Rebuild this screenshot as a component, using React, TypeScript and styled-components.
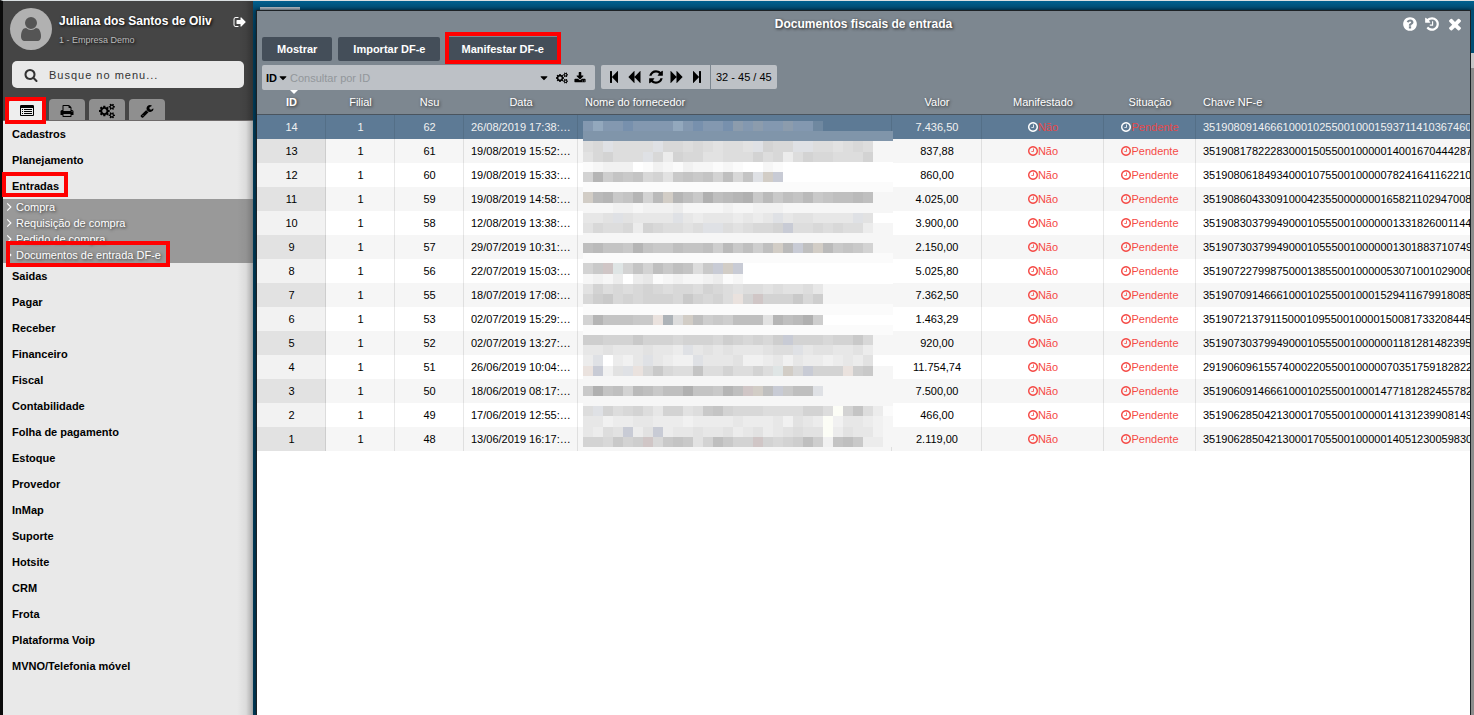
import React from "react";
import styled, { createGlobalStyle, css } from "styled-components";

const GlobalStyle = createGlobalStyle`
  *, *::before, *::after { box-sizing: border-box; }
  body {
    margin: 0;
    font-family: "Liberation Sans", Arial, sans-serif;
    font-size: 11px;
    line-height: 16px;
    color: #000;
    overflow: hidden;
  }
  button, input { font: inherit; color: inherit; border: 0; padding: 0; margin: 0; background: none; }
  a { color: inherit; text-decoration: none; }
  ul { list-style: none; margin: 0; padding: 0; }
`;

/* ---------- icons ---------- */

const paths = {
  user: "M1536 1399q0 109-62.5 187t-150.5 78h-854q-88 0-150.5-78t-62.5-187q0-85 8.5-160.5t31.5-152 58.5-131 94-89 134.5-34.5q131 128 313 128t313-128q76 0 134.5 34.5t94 89 58.5 131 31.5 152 8.5 160.5zm-256-887q0 159-112.5 271.5t-271.5 112.5-271.5-112.5-112.5-271.5 112.5-271.5 271.5-112.5 271.5 112.5 112.5 271.5z",
  signOut: "M704 1440q0 4 1 20t.5 26.5-3 23.5-10 19.5-20.5 6.5h-320q-119 0-203.5-84.5t-84.5-203.5v-704q0-119 84.5-203.5t203.5-84.5h320q13 0 22.5 9.5t9.5 22.5q0 4 1 20t.5 26.5-3 23.5-10 19.5-20.5 6.5h-320q-66 0-113 47t-47 113v704q0 66 47 113t113 47h312l11.5 1 11.5 3 8 5.5 7 9 2 13.5zm928-544q0 26-19 45l-544 544q-19 19-45 19t-45-19-19-45v-288h-448q-26 0-45-19t-19-45v-384q0-26 19-45t45-19h448v-288q0-26 19-45t45-19 45 19l544 544q19 19 19 45z",
  search: "M1216 832q0-185-131.5-316.5t-316.5-131.5-316.5 131.5-131.5 316.5 131.5 316.5 316.5 131.5 316.5-131.5 131.5-316.5zm512 832q0 52-38 90t-90 38q-54 0-90-38l-343-342q-179 124-399 124-143 0-273.5-55.5t-225-150-150-225-55.5-273.5 55.5-273.5 150-225 225-150 273.5-55.5 273.5 55.5 225 150 150 225 55.5 273.5q0 220-124 399l343 343q37 37 37 90z",
  list: "M256 1152h128v128h-128zM256 896h128v128h-128zM256 640h128v128h-128zM512 1152h1024v128h-1024zM512 896h1024v128h-1024zM512 640h1024v128h-1024zM1664 1376v-832q0-13-9.500-22.500t-22.500-9.500h-1472q-13 0-22.500 9.500t-9.500 22.500v832q0 13 9.500 22.500t22.500 9.500h1472q13 0 22.500-9.500t9.500-22.500zM1792 288v1088q0 66-47 113t-113 47h-1472q-66 0-113-47t-47-113v-1088q0-66 47-113t113-47h1472q66 0 113 47t47 113z",
  print: "M448 1536h896v-256h-896v256zm0-640h896v-384h-160q-40 0-68-28t-28-68v-160h-640v640zm1152 64q0-26-19-45t-45-19-45 19-19 45 19 45 45 19 45-19 19-45zm128 0v416q0 13-9.500 22.500t-22.500 9.500h-224v160q0 40-28 68t-68 28h-960q-40 0-68-28t-28-68v-160h-224q-13 0-22.500-9.500t-9.500-22.500v-416q0-79 56.500-135.500t135.500-56.500h64v-544q0-40 28-68t68-28h672q40 0 88 20t76 48l152 152q28 28 48 76t20 88v256h64q79 0 135.500 56.500t56.500 135.500z",
  cogs: "M832 896q0-106-75-181t-181-75-181 75-75 181 75 181 181 75 181-75 75-181zm768 512q0-52-38-90t-90-38-90 38-38 90q0 53 37.500 90.500t90.500 37.500 90.500-37.500 37.500-90.500zm0-1024q0-52-38-90t-90-38-90 38-38 90q0 53 37.500 90.500t90.500 37.500 90.500-37.500 37.500-90.500zm-384 421v185q0 10-7 19.500t-16 10.500l-155 24q-11 35-32 76 34 48 90 115 7 11 7 20 0 12-7 19-23 30-82.500 89.500t-78.500 59.500q-11 0-21-7l-115-90q-37 19-77 31-11 108-23 155-7 24-30 24h-186q-11 0-20-7.500t-10-17.500l-23-153q-34-10-75-31l-118 89q-7 7-20 7-11 0-21-8-144-133-144-160 0-9 7-19 10-14 41-53t47-61q-23-44-35-82l-152-24q-10-1-17-9.500t-7-19.500v-185q0-10 7-19.500t16-10.500l155-24q11-35 32-76-34-48-90-115-7-11-7-20 0-12 7-20 22-30 82-89t79-59q11 0 21 7l115 90q34-18 77-32 11-108 23-154 7-24 30-24h186q11 0 20 7.500t10 17.500l23 153q34 10 75 31l118-89q8-7 20-7 11 0 21 8 144 133 144 160 0 8-7 19-12 16-42 54t-45 60q23 48 34 82l152 23q10 2 17 10.500t7 19.500zm640 533v140q0 16-149 31-12 27-30 52 51 113 51 138 0 4-4 7-122 71-124 71-8 0-46-47t-52-68q-20 2-30 2t-30-2q-14 21-52 68t-46 47q-2 0-124-71-4-3-4-7 0-25 51-138-18-25-30-52-149-15-149-31v-140q0-16 149-31 13-29 30-52-51-113-51-138 0-4 4-7 4-2 35-20t59-34 30-16q8 0 46 46.500t52 67.500q20-2 30-2t30 2q51-71 92-112l6-2q4 0 124 70 4 3 4 7 0 25-51 138 17 23 30 52 149 15 149 31zm0-1024v140q0 16-149 31-12 27-30 52 51 113 51 138 0 4-4 7-122 71-124 71-8 0-46-47t-52-68q-20 2-30 2t-30-2q-14 21-52 68t-46 47q-2 0-124-71-4-3-4-7 0-25 51-138-18-25-30-52-149-15-149-31v-140q0-16 149-31 13-29 30-52-51-113-51-138 0-4 4-7 4-2 35-20t59-34 30-16q8 0 46 46.500t52 67.500q20-2 30-2t30 2q51-71 92-112l6-2q4 0 124 70 4 3 4 7 0 25-51 138 17 23 30 52 149 15 149 31z",
  wrench: "M448 1472q0-26-19-45t-45-19-45 19-19 45 19 45 45 19 45-19 19-45zm644-420l-682 682q-37 37-90 37-52 0-91-37l-106-108q-38-36-38-90 0-53 38-91l681-681q39 98 114.500 173.500t173.500 114.500zm634-435q0 39-23 106-47 134-164.500 217.500t-258.500 83.500q-185 0-316.500-131.500t-131.500-316.500 131.500-316.500 316.500-131.500q58 0 121.500 16.500t107.500 46.500q16 11 16 28t-16 28l-293 169v224l193 107q5-3 79-48.500t135.500-81 70.500-35.500q15 0 23.500 10t8.500 25z",
  stepBack: "M1363 141q19-19 32-13t13 32v1472q0 26-13 32t-32-13l-710-710q-9-9-13-19v678q0 26-19 45t-45 19h-128q-26 0-45-19t-19-45v-1408q0-26 19-45t45-19h128q26 0 45 19t19 45v678q4-11 13-19z",
  stepForward: "M429 1651q-19 19-32 13t-13-32v-1472q0-26 13-32t32 13l710 710q9 8 13 19v-678q0-26 19-45t45-19h128q26 0 45 19t19 45v1408q0 26-19 45t-45 19h-128q-26 0-45-19t-19-45v-678q-4 10-13 19z",
  back: "M1683 141q19-19 32-13t13 32v1472q0 26-13 32t-32-13l-710-710q-9-9-13-19v710q0 26-13 32t-32-13l-710-710q-19-19-19-45t19-45l710-710q19-19 32-13t13 32v710q4-11 13-19z",
  forward: "M109 1651q-19 19-32 13t-13-32v-1472q0-26 13-32t32 13l710 710q8 8 13 19v-710q0-26 13-32t32 13l710 710q19 19 19 45t-19 45l-710 710q-19 19-32 13t-13-32v-710q-5 10-13 19z",
  refresh: "M1639 1056q0 5-1 7-64 268-268 434.500t-478 166.500q-146 0-282.500-55t-243.500-157l-129 129q-19 19-45 19t-45-19-19-45v-448q0-26 19-45t45-19h448q26 0 45 19t19 45-19 45l-137 137q71 66 161 102t187 36q134 0 250-65t186-179q11-17 53-117 8-23 30-23h192q13 0 22.500 9.500t9.500 22.500zm25-800v448q0 26-19 45t-45 19h-448q-26 0-45-19t-19-45 19-45l138-138q-148-137-349-137-134 0-250 65t-186 179q-11 17-53 117-8 23-30 23h-199q-13 0-22.500-9.500t-9.500-22.500v-7q65-268 270-434.500t480-166.500q146 0 284 55.500t245 156.500l130-129q19-19 45-19t45 19 19 45z",
  download: "M1344 1344q0-26-19-45t-45-19-45 19-19 45 19 45 45 19 45-19 19-45zm256 0q0-26-19-45t-45-19-45 19-19 45 19 45 45 19 45-19 19-45zm128-224v320q0 40-28 68t-68 28h-1472q-40 0-68-28t-28-68v-320q0-40 28-68t68-28h465l135 136q58 56 136 56t136-56l136-136h464q40 0 68 28t28 68zm-325-569q17 41-14 70l-448 448q-18 19-45 19t-45-19l-448-448q-31-29-14-70 17-39 59-39h256v-448q0-26 19-45t45-19h256q26 0 45 19t19 45v448h256q42 0 59 39z",
  caret: "M1408 704q0 26-19 45l-448 448q-19 19-45 19t-45-19l-448-448q-19-19-19-45t19-45 45-19h896q26 0 45 19t19 45z",
  clock: "M1024 544v448q0 14-9 23t-23 9h-320q-14 0-23-9t-9-23v-64q0-14 9-23t23-9h224v-352q0-14 9-23t23-9h64q14 0 23 9t9 23zm416 352q0-148-73-273t-198-198-273-73-273 73-198 198-73 273 73 273 198 198 273 73 273-73 198-198 73-273zm224 0q0 209-103 385.500t-279.500 279.500-385.500 103-385.500-103-279.500-279.500-103-385.500 103-385.500 279.500-279.500 385.500-103 385.500 103 279.500 279.500 103 385.500z",
  close: "M1490 1322q0 40-28 68l-136 136q-28 28-68 28t-68-28l-294-294-294 294q-28 28-68 28t-68-28l-136-136q-28-28-28-68t28-68l294-294-294-294q-28-28-28-68t28-68l136-136q28-28 68-28t68 28l294 294 294-294q28-28 68-28t68 28l136 136q28 28 28 68t-28 68l-294 294 294 294q28 28 28 68z",
  help: "M1024 1376v-192q0-14-9-23t-23-9h-192q-14 0-23 9t-9 23v192q0 14 9 23t23 9h192q14 0 23-9t9-23zm256-672q0-88-55.500-163t-138.500-116-170-41q-243 0-371 213-15 24 8 42l132 100q7 6 19 6 16 0 25-12 53-68 86-92 34-24 86-24 48 0 85.500 26t37.500 59q0 38-20 61t-68 45q-63 28-115.500 86.500t-52.500 125.500v36q0 14 9 23t23 9h192q14 0 23-9t9-23q0-19 21.500-49.500t54.500-49.500q32-18 49-28.500t46-35 44.500-48 28-60.500 12.500-81zm384 192q0 209-103 385.500t-279.500 279.500-385.500 103-385.500-103-279.500-279.500-103-385.500 103-385.500 279.500-279.500 385.500-103 385.500 103 279.500 279.500 103 385.500z",
  history: "M1664 896q0 156-61 298t-164 245-245 164-298 61q-172 0-327-72.500t-264-204.500q-7-10-6.500-22.500t8.500-20.500l137-138q10-9 25-9 16 2 23 12 73 95 179 147t225 52q104 0 198.500-40.500t163.500-109.500 109.500-163.500 40.500-198.500-40.500-198.500-109.500-163.500-163.500-109.500-198.500-40.500q-98 0-188 35.500t-160 101.500l137 138q31 30 14 69-17 40-59 40h-448q-26 0-45-19t-19-45v-448q0-42 40-59 39-17 69 14l130 129q107-101 244.500-156.500t284.500-55.500q156 0 298 61t245 164 164 245 61 298zm-640-288v448q0 14-9 23t-23 9h-320q-14 0-23-9t-9-23v-64q0-14 9-23t23-9h224v-352q0-14 9-23t23-9h64q14 0 23 9t9 23z",
  angle: "M500 320l150-150 726 726-726 726-150-150 576-576z",
};

type IconName = keyof typeof paths;

const viewBoxes: Partial<Record<IconName, string>> = {
  cogs: "-64 0 1920 1792",
  clock: "128 128 1536 1536",
};

const Glyph = styled.svg`
  display: block;
  flex: none;
  fill: currentColor;
`;

function Icon({ name, size }: { name: IconName; size: number }) {
  return (
    <Glyph
      width={size}
      height={size}
      viewBox={viewBoxes[name] ?? "0 0 1792 1792"}
      fillRule={name === "list" ? "evenodd" : "nonzero"}
      aria-hidden="true"
    >
      <path d={paths[name]} />
    </Glyph>
  );
}

/* ---------- frame ---------- */

const Desktop = styled.div`
  min-height: 100vh;
  display: flex;
  border-top: 1px solid #dbe0e2;
  border-left: 3px solid #0b0b0b;
  background: linear-gradient(#00608f, #00476b 10px, #003c59 40px, #003c59);
`;

const Mark = styled.span`
  position: absolute;
  inset: -4px;
  border: 4px solid #f00;
  z-index: 3;
  pointer-events: none;
`;

/* ---------- side menu ---------- */

const Sidebar = styled.aside`
  width: 250px;
  flex: none;
  display: flex;
  flex-direction: column;
`;

const SideHead = styled.header`
  height: 120px;
  background: linear-gradient(90deg, transparent 236px, rgba(0, 0, 0, 0.06) 243px, rgba(0, 0, 0, 0.25)), #454545;
  border-bottom: 1px solid #6e6a6a;
  display: flex;
  flex-direction: column;
`;

const UserRow = styled.div`
  display: flex;
  gap: 7px;
  padding: 7px 6px 0 7px;
`;

const Avatar = styled.div`
  width: 42px;
  height: 42px;
  border-radius: 50%;
  background: #b1b1b1;
  color: #555;
  display: flex;
  align-items: center;
  justify-content: center;
`;

const UserText = styled.div`
  flex: 1;
  padding-top: 5px;
  text-shadow: 1px 1px 3px #000;
`;

const UserName = styled.div`
  font-size: 12px;
  font-weight: bold;
  color: #fff;
  white-space: nowrap;
`;

const Company = styled.div`
  font-size: 9px;
  color: #bbb;
  padding-top: 3px;
`;

const IconButton = styled.button`
  display: flex;
  align-items: center;
  justify-content: center;
  cursor: pointer;
`;

const LogoutButton = styled(IconButton)`
  height: 14px;
  margin-top: 7px;
  color: #fff;
`;

const MenuSearch = styled.label`
  margin: 11px 9px 0;
  height: 27px;
  border-radius: 5px;
  background: #e9e9e9;
  display: flex;
  align-items: center;
  gap: 11px;
  padding: 0 12px;
  color: #333;
  input {
    flex: 1;
    min-width: 0;
    letter-spacing: 1px;
    outline: 0;
  }
  input::placeholder { color: #333; opacity: 1; }
`;

const Tabs = styled.div`
  display: flex;
  gap: 4px;
  padding: 11px 6px 0;
`;

const Tab = styled.button<{ $active?: boolean }>`
  position: relative;
  width: 36px;
  height: 21px;
  border-radius: 4px 4px 0 0;
  background: #8f8f8f;
  display: flex;
  align-items: center;
  justify-content: center;
  padding-top: 3px;
  ${(p) => p.$active && css`background: #eee;`}
`;

const TabMark = styled(Mark)`
  inset: -2px -1px -4px -4px;
`;

const Menu = styled.nav`
  flex: 1;
  background: linear-gradient(90deg, transparent 234px, rgba(0, 0, 0, 0.06) 243px, rgba(0, 0, 0, 0.28)), #e9e9e9;
`;

const MenuLink = styled.a`
  position: relative;
  display: block;
  padding: 5px 9px;
  font-weight: bold;
`;

const EntryMark = styled(Mark)`
  inset: -1px 185px 2px -1px;
`;

const SubMenu = styled.ul`
  background: linear-gradient(90deg, transparent 234px, rgba(0, 0, 0, 0.04) 243px, rgba(0, 0, 0, 0.2)), #999;
`;

const SubLink = styled.a`
  position: relative;
  display: flex;
  align-items: center;
  gap: 2px;
  padding-left: 1px;
  height: 16px;
  color: #fff;
  text-shadow: 1px 1px 3px #333;
`;

const SubMark = styled(Mark)`
  inset: -6px 83px -4px 3px;
`;

/* ---------- window ---------- */

const Stage = styled.main`
  flex: 1;
  min-width: 0;
  display: flex;
  flex-direction: column;
  padding-left: 3px;
`;

const Backdrop = styled.div`
  height: 9px;
  padding: 6px 0 0 4px;
  &::before {
    content: "";
    display: block;
    width: 40px;
    height: 3px;
    background: #b5bcc2;
  }
`;

const WindowRow = styled.div`
  flex: 1;
  display: flex;
`;

const Gutter = styled.div`
  width: 3px;
  background: linear-gradient(#004e74 43px, #c6c6c6 43px, #c6c6c6 58px, #8c8c8c 58px);
`;

const Window = styled.section`
  flex: 1;
  min-width: 0;
  border: 1px solid #1d2226;
  border-bottom: 0;
  background: #fff;
  box-shadow: 0 0 4px #001c2b;
`;

const WindowHead = styled.header`
  background: #7d8790;
  padding: 0 5px;
`;

const TitleRow = styled.div`
  display: grid;
  grid-template-columns: 1fr auto 1fr;
  align-items: center;
  height: 26px;
  color: #fff;
  h1 {
    grid-column: 2;
    margin: 0;
    font-size: 12px;
    font-weight: bold;
    text-shadow: 1px 1px 3px #222;
  }
`;

const WindowTools = styled.div`
  display: flex;
  justify-content: flex-end;
  gap: 6px;
  padding-right: 1px;
`;

const Actions = styled.div`
  display: flex;
  gap: 6px;
`;

const ActionButton = styled.button`
  position: relative;
  height: 24px;
  padding: 0 15px;
  border-radius: 2px;
  background: #444e59;
  color: #fff;
  font-weight: bold;
`;

const ActionMark = styled(Mark)`
  inset: -5px -2px -3px -1px;
`;

const Toolbar = styled.div`
  display: flex;
  gap: 6px;
  padding-top: 4px;
  height: 29px;
  color: #000;
`;

const FilterBox = styled.div`
  width: 333px;
  height: 25px;
  border-radius: 2px;
  background: #bdc1c6;
  display: flex;
  align-items: center;
  gap: 1px;
  padding: 0 9px 0 4px;
  input { flex: 1; min-width: 0; outline: 0; }
  input::placeholder { color: #92979b; opacity: 1; }
`;

const FilterTools = styled.div`
  display: flex;
  align-items: center;
  gap: 6px;
`;

const FieldButton = styled.button`
  display: flex;
  align-items: center;
  font-weight: bold;
`;

const Pager = styled.div`
  display: flex;
  height: 24px;
  border-radius: 2px;
  background: #bdc1c6;
`;

const PagerButtons = styled.div`
  display: flex;
  align-items: center;
  justify-content: space-between;
  width: 110px;
  padding: 0 6px;
  border-right: 1px solid #7d8790;
`;

const PagerRange = styled.div`
  padding: 4px 5px;
`;

/* ---------- grid ---------- */

const Grid = styled.table`
  width: 100%;
  table-layout: fixed;
  border-collapse: separate;
  border-spacing: 0;
`;

const HeadCell = styled.th<{ $left?: boolean; $sorted?: boolean }>`
  position: relative;
  height: 25px;
  padding: 0 7px;
  background: #7d8790;
  border-bottom: 1px solid #4a545e;
  color: #fff;
  font-weight: ${(p) => (p.$sorted ? "bold" : "normal")};
  text-align: ${(p) => (p.$left ? "left" : "center")};
  text-shadow: 1px 1px 3px #333;
  ${(p) =>
    p.$sorted &&
    css`
      &::before {
        content: "";
        position: absolute;
        top: 0;
        left: 33px;
        border: 4px solid transparent;
        border-top-color: #fff;
        border-bottom: 0;
      }
    `}
`;

const Cell = styled.td<{ $left?: boolean; $clip?: boolean }>`
  height: 24px;
  padding: 0 7px;
  white-space: nowrap;
  text-align: ${(p) => (p.$left ? "left" : "center")};
  box-shadow: inset -1px 0 rgba(0, 0, 0, 0.09);
  ${(p) => p.$clip && css`overflow: hidden; padding-right: 0; box-shadow: none;`}
`;

const MaskedCell = styled(Cell)`
  position: relative;
`;

const Status = styled.span`
  display: flex;
  align-items: center;
  justify-content: center;
  color: #f54a46;
`;

const Row = styled.tr<{ $selected: boolean }>`
  & > td:first-child { background: #f2f2f2; }
  &:nth-child(even) { background: #f6f6f6; }
  &:nth-child(even) > td:first-child { background: #e2e2e2; }
  ${(p) =>
    p.$selected &&
    css`
      &&, && > td:first-child { background: #5d7a95; color: #f1f1f1; }
      ${Status} { color: #e5484a; }
      ${Status} svg { color: #fff; }
    `}
`;

const Mosaic = styled.svg`
  position: absolute;
  left: 5px;
  top: 6px;
  z-index: 1;
`;

/* Each character is one 10px block of the obscured supplier names. */
const tones: Record<string, string> = {
  A: "#8398b0", B: "#93a8bd", C: "#7790ad", D: "#8c9cad", E: "#6f88a0", H: "#8095aa",
  0: "#b0b0b0", 1: "#b5b5b5", 2: "#bababa", 3: "#bfbfbf", 4: "#c4c4c4",
  5: "#c9c9c9", 6: "#cecece", 7: "#d3d3d3", 8: "#d8d8d8", 9: "#dddddd",
  a: "#e2e2e2", l: "#e7e7e7", c: "#ececec", d: "#f1f1f1", e: "#f6f6f6", f: "#fbfbfb", g: "#fff",
  w: "#d2cdc6", r: "#d0c6c6", b: "#c8cbd5", n: "#dfe1e5", t: "#dfe5e5", p: "#eae2de", y: "#fcfdf6", s: "#adb3b8",
};

/* Line height, blocks from the left, and the block that fills the rest of the line. */
const mosaic: [number, string, string][] = [
  [10, "ABAACAAAABACAACDADAADAAE", "."],
  [10, "", "H"],
  [11, "98n9999n88989a99an788nn99a989", "e"],
  [10, "a87999n8c788aa999798c97889997", "e"],
  [10, "fedddgfdefdeefefggef", "g"],
  [10, "71645487a54547384764nwb".slice(0, 17) + "nwb", "g"],
  [10, "", "f"],
  [11, "w2154172w13503210525342543323", "e"],
  [10, "eeeddedddceeeedeeddd", "e"],
  [10, "llanallllnlclllclclnlaallllna", "g"],
  [10, "a8998c7899a9nn9a9887b9989899c", "e"],
  [10, "", "e"],
  [10, "3244514553443625363w2b3w25457", "e"],
  [10, "", "f"],
  [11, "75rt747353495b8wb".slice(0, 14) + "wb", "g"],
  [10, "edecgclfedeedcfe", "g"],
  [10, "a79898789889789a99a9aa9l", "e"],
  [10, "865878777857879p7r777586", "e"],
  [11, "", "f"],
  [10, "7144455ps9w3656333a13206", "g"],
  [10, "", "f"],
  [10, "66777577787778678786b77787758", "e"],
  [10, "llalllallcnlalallla99nlaallac", "e"],
  [11, "cngcdlnlcddnllladdcldlccdclca", "g"],
  [10, "pbdanp8589949979979tw8b777p65", "e"],
  [10, "", "e"],
  [10, "5043723533044513rw3b533n", "e"],
  [10, "", "e"],
  [10, "9n79879l77a95478889999779y749c", "f"],
  [11, "lldccllcccdcccclcccldalcydllcd", "e"],
  [10, "lc9abcabcllallaclacla9aalycall".slice(0, 24) + "ycalld", "e"],
  [10, "778576r8545a73577r787636d435cc", "e"],
];

const NAME_BLOCKS = 31;

function NameMosaic() {
  let top = 0;
  return (
    <Mosaic width={310} height={326} viewBox="0 0 310 326" shapeRendering="crispEdges" aria-hidden="true">
      {mosaic.map(([height, text, filler], row) => {
        const y = top;
        top += height;
        return text
          .padEnd(NAME_BLOCKS, filler)
          .split("")
          .map((c, x) =>
            c === "." ? null : (
              <rect key={`${row}-${x}`} x={x * 10} y={y} width={10} height={height} fill={tones[c]} />
            )
          );
      })}
    </Mosaic>
  );
}

const columns = [
  { label: "ID", width: 69, sorted: true },
  { label: "Filial", width: 69 },
  { label: "Nsu", width: 69 },
  { label: "Data", width: 114 },
  { label: "Nome do fornecedor", width: 314, left: true },
  { label: "Valor", width: 90 },
  { label: "Manifestado", width: 122 },
  { label: "Situação", width: 92 },
  { label: "Chave NF-e", left: true },
] as { label: string; width?: number; left?: boolean; sorted?: boolean }[];

const rows = [
  [14, 62, "26/08/2019 17:38:…", "7.436,50", "35190809146661000102550010001593711410367460"],
  [13, 61, "19/08/2019 15:52:…", "837,88", "35190817822283000150550010000014001670444287"],
  [12, 60, "19/08/2019 15:33:…", "860,00", "35190806184934000107550010000078241641162210"],
  [11, 59, "19/08/2019 14:58:…", "4.025,00", "35190860433091000423550000000165821102947008"],
  [10, 58, "12/08/2019 13:38:…", "3.900,00", "35190830379949000105550010000001331826001144"],
  [9, 57, "29/07/2019 10:31:…", "2.150,00", "35190730379949000105550010000001301883710749"],
  [8, 56, "22/07/2019 15:03:…", "5.025,80", "35190722799875000138550010000053071001029006"],
  [7, 55, "18/07/2019 17:08:…", "7.362,50", "35190709146661000102550010001529411679918085"],
  [6, 53, "02/07/2019 15:29:…", "1.463,29", "35190721379115000109550010000150081733208445"],
  [5, 52, "02/07/2019 13:27:…", "920,00", "35190730379949000105550010000001181281482395"],
  [4, 51, "26/06/2019 10:04:…", "11.754,74", "29190609615574000220550010000070351759182822"],
  [3, 50, "18/06/2019 08:17:…", "7.500,00", "35190609146661000102550010001477181282455782"],
  [2, 49, "17/06/2019 12:55:…", "466,00", "35190628504213000170550010000014131239908149"],
  [1, 48, "13/06/2019 16:17:…", "2.119,00", "35190628504213000170550010000014051230059830"],
];

const menuTop = ["Cadastros", "Planejamento"];
const entradas = ["Compra", "Requisição de compra", "Pedido de compra", "Documentos de entrada DF-e"];
const menuRest = [
  "Saidas", "Pagar", "Receber", "Financeiro", "Fiscal", "Contabilidade", "Folha de pagamento", "Estoque",
  "Provedor", "InMap", "Suporte", "Hotsite", "CRM", "Frota", "Plataforma Voip", "MVNO/Telefonia móvel",
];

export default function App() {
  return (
    <>
      <GlobalStyle />
      <Desktop>
        <Sidebar>
          <SideHead>
            <UserRow>
              <Avatar><Icon name="user" size={28} /></Avatar>
              <UserText>
                <UserName>Juliana dos Santos de Oliv</UserName>
                <Company>1 - Empresa Demo</Company>
              </UserText>
              <LogoutButton type="button" aria-label="Sair"><Icon name="signOut" size={14} /></LogoutButton>
            </UserRow>
            <MenuSearch>
              <Icon name="search" size={14} />
              <input type="text" placeholder="Busque no menu..." aria-label="Busque no menu" />
            </MenuSearch>
            <Tabs>
              <Tab type="button" $active aria-label="Menu"><Icon name="list" size={14} /><TabMark /></Tab>
              <Tab type="button" aria-label="Relatórios"><Icon name="print" size={14} /></Tab>
              <Tab type="button" aria-label="Configurações"><Icon name="cogs" size={16} /></Tab>
              <Tab type="button" aria-label="Ferramentas"><Icon name="wrench" size={14} /></Tab>
            </Tabs>
          </SideHead>
          <Menu>
            {menuTop.map((item) => <MenuLink href="#" key={item}>{item}</MenuLink>)}
            <MenuLink href="#">Entradas<EntryMark /></MenuLink>
            <SubMenu>
              {entradas.map((item, i) => (
                <li key={item}>
                  <SubLink href="#">
                    <Icon name="angle" size={10} />
                    {item}
                    {i === entradas.length - 1 && <SubMark />}
                  </SubLink>
                </li>
              ))}
            </SubMenu>
            {menuRest.map((item) => <MenuLink href="#" key={item}>{item}</MenuLink>)}
          </Menu>
        </Sidebar>

        <Stage>
          <Backdrop />
          <WindowRow>
            <Window>
              <WindowHead>
                <TitleRow>
                  <h1>Documentos fiscais de entrada</h1>
                  <WindowTools>
                    <IconButton type="button" aria-label="Ajuda"><Icon name="help" size={16} /></IconButton>
                    <IconButton type="button" aria-label="Histórico"><Icon name="history" size={16} /></IconButton>
                    <IconButton type="button" aria-label="Fechar"><Icon name="close" size={18} /></IconButton>
                  </WindowTools>
                </TitleRow>
                <Actions>
                  <ActionButton type="button">Mostrar</ActionButton>
                  <ActionButton type="button">Importar DF-e</ActionButton>
                  <ActionButton type="button">Manifestar DF-e<ActionMark /></ActionButton>
                </Actions>
                <Toolbar>
                  <FilterBox>
                    <FieldButton type="button">ID<Icon name="caret" size={12} /></FieldButton>
                    <input type="text" placeholder="Consultar por ID" aria-label="Consultar por ID" />
                    <FilterTools>
                      <IconButton type="button" aria-label="Opções"><Icon name="caret" size={12} /></IconButton>
                      <IconButton type="button" aria-label="Configurar"><Icon name="cogs" size={12} /></IconButton>
                      <IconButton type="button" aria-label="Baixar"><Icon name="download" size={12} /></IconButton>
                    </FilterTools>
                  </FilterBox>
                  <Pager>
                    <PagerButtons>
                      <IconButton type="button" aria-label="Primeira"><Icon name="stepBack" size={14} /></IconButton>
                      <IconButton type="button" aria-label="Anterior"><Icon name="back" size={14} /></IconButton>
                      <IconButton type="button" aria-label="Atualizar"><Icon name="refresh" size={16} /></IconButton>
                      <IconButton type="button" aria-label="Próxima"><Icon name="forward" size={14} /></IconButton>
                      <IconButton type="button" aria-label="Última"><Icon name="stepForward" size={14} /></IconButton>
                    </PagerButtons>
                    <PagerRange>32 - 45 / 45</PagerRange>
                  </Pager>
                </Toolbar>
              </WindowHead>
              <Grid>
                <colgroup>
                  {columns.map((c) => <col key={c.label} width={c.width} />)}
                </colgroup>
                <thead>
                  <tr>
                    {columns.map((c) => (
                      <HeadCell key={c.label} scope="col" $left={c.left} $sorted={c.sorted}>{c.label}</HeadCell>
                    ))}
                  </tr>
                </thead>
                <tbody>
                  {rows.map(([id, nsu, date, value, key], i) => (
                    <Row key={id} $selected={i === 0}>
                      <Cell>{id}</Cell>
                      <Cell>1</Cell>
                      <Cell>{nsu}</Cell>
                      <Cell $left>{date}</Cell>
                      <MaskedCell>{i === 0 && <NameMosaic />}</MaskedCell>
                      <Cell>{value}</Cell>
                      <Cell><Status><Icon name="clock" size={10} />Não</Status></Cell>
                      <Cell><Status><Icon name="clock" size={10} />Pendente</Status></Cell>
                      <Cell $left $clip>{key}</Cell>
                    </Row>
                  ))}
                </tbody>
              </Grid>
            </Window>
            <Gutter />
          </WindowRow>
        </Stage>
      </Desktop>
    </>
  );
}
